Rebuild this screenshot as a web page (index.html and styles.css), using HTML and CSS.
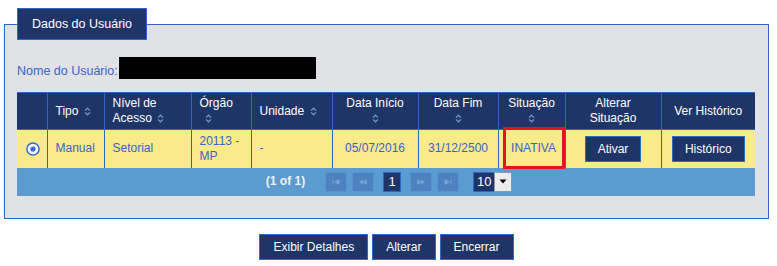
FILE: index.html
```html
<!DOCTYPE html>
<html lang="pt-BR">
<head>
<meta charset="utf-8">
<title>Dados do Usuário</title>
<link rel="stylesheet" href="styles.css">
</head>
<body>
<div class="page">
  <fieldset class="panel">
    <legend class="panel-title">Dados do Usuário</legend>
    <div class="name-row">
      <span class="name-label">Nome do Usuário:</span><span class="redacted"></span>
    </div>
    <table class="grid">
      <colgroup>
        <col class="w30"><col class="w57"><col class="w87"><col class="w60"><col class="w81">
        <col class="w86"><col class="w80"><col class="w67"><col class="w96"><col class="w94">
      </colgroup>
      <thead>
        <tr class="head-row">
          <th></th>
          <th class="left">Tipo <svg class="sort" viewBox="0 0 7 9"><path d="M1 3.6 3.5 1.2 6 3.6M1 5.4 3.5 7.8 6 5.4"/></svg></th>
          <th class="left">Nível de<br>Acesso <svg class="sort" viewBox="0 0 7 9"><path d="M1 3.6 3.5 1.2 6 3.6M1 5.4 3.5 7.8 6 5.4"/></svg></th>
          <th class="left">Órgão<br><svg class="sort sort-w" viewBox="0 0 7 9"><path d="M1 3.6 3.5 1.2 6 3.6M1 5.4 3.5 7.8 6 5.4"/></svg></th>
          <th class="left">Unidade <svg class="sort" viewBox="0 0 7 9"><path d="M1 3.6 3.5 1.2 6 3.6M1 5.4 3.5 7.8 6 5.4"/></svg></th>
          <th>Data Início<br><svg class="sort sort-c" viewBox="0 0 7 9"><path d="M1 3.6 3.5 1.2 6 3.6M1 5.4 3.5 7.8 6 5.4"/></svg></th>
          <th>Data Fim<br><svg class="sort sort-c" viewBox="0 0 7 9"><path d="M1 3.6 3.5 1.2 6 3.6M1 5.4 3.5 7.8 6 5.4"/></svg></th>
          <th>Situação<br><svg class="sort sort-c" viewBox="0 0 7 9"><path d="M1 3.6 3.5 1.2 6 3.6M1 5.4 3.5 7.8 6 5.4"/></svg></th>
          <th>Alterar<br>Situação</th>
          <th>Ver Histórico</th>
        </tr>
      </thead>
      <tbody>
        <tr class="data-row">
          <td class="radio-cell"><svg class="radio" viewBox="0 0 14 14"><circle cx="7" cy="7" r="6.1" class="ring"/><circle cx="7" cy="7" r="2.6" class="dot"/></svg></td>
          <td class="left">Manual</td>
          <td class="left">Setorial</td>
          <td class="left">20113 - MP</td>
          <td class="left">-</td>
          <td>05/07/2016</td>
          <td>31/12/2500</td>
          <td class="status">INATIVA<span class="highlight"></span></td>
          <td><button class="btn">Ativar</button></td>
          <td><button class="btn">Histórico</button></td>
        </tr>
      </tbody>
      <tfoot>
        <tr>
          <td colspan="10" class="pager">
            <div class="pager-inner">
              <span class="page-info">(1 of 1)</span>
              <span class="pg-btn pg-first"><svg viewBox="0 0 8 6"><path d="M1 0.5v5M7 0.5 3 3l4 2.5z"/></svg></span>
              <span class="pg-btn pg-prev"><svg viewBox="0 0 9 6"><path d="M4.5 0.5 1 3l3.5 2.5zM8.5 0.5 5 3l3.5 2.5z"/></svg></span>
              <span class="pg-page">1</span>
              <span class="pg-btn pg-next"><svg viewBox="0 0 9 6"><path d="M0.5 0.5 4 3 0.5 5.5zM4.5 0.5 8 3 4.5 5.5z"/></svg></span>
              <span class="pg-btn pg-last"><svg viewBox="0 0 8 6"><path d="M1 0.5 5 3 1 5.5zM7 0.5v5"/></svg></span>
              <span class="rows-select"><span class="rows-value">10</span><span class="rows-arrow"><svg viewBox="0 0 8 5"><path d="M0.5 0.5h7L4 4.5z"/></svg></span></span>
            </div>
          </td>
        </tr>
      </tfoot>
    </table>
  </fieldset>
  <div class="actions">
    <button class="btn">Exibir Detalhes</button>
    <button class="btn">Alterar</button>
    <button class="btn">Encerrar</button>
  </div>
</div>
</body>
</html>
```
FILE: styles.css
```css
html, body {
  margin: 0;
  padding: 0;
  background: #ffffff;
}

body {
  font-family: "Liberation Sans", Arial, sans-serif;
  font-size: 12px;
  color: #3a63c9;
}

.page {
  padding: 8px 8px 0 4px;
}

.panel {
  margin: 0;
  padding: 0 12px 22px 12px;
  border: 1px solid #2c66cc;
  background: #e1e2e6;
  min-width: 0;
}

.panel-title {
  padding: 0 14px;
  height: 30px;
  line-height: 30px;
  border: 1px solid #2c66cc;
  background: #1f3568;
  color: #ffffff;
  font-size: 12.5px;
}

.name-row {
  display: flex;
  align-items: flex-end;
  margin-top: 17px;
  height: 22px;
}

.name-label {
  font-size: 12.5px;
  line-height: 16px;
  color: #3a63c9;
}

.redacted {
  display: inline-block;
  width: 197px;
  height: 22px;
  background: #000000;
  margin-left: 1px;
}

.grid {
  margin-top: 13px;
  width: 738px;
  border-collapse: collapse;
  table-layout: fixed;
  font-size: 12px;
}

.w30 { width: 30px; }
.w57 { width: 57px; }
.w87 { width: 87px; }
.w60 { width: 60px; }
.w81 { width: 81px; }
.w86 { width: 86px; }
.w80 { width: 80px; }
.w67 { width: 67px; }
.w96 { width: 96px; }
.w94 { width: 94px; }

.grid th,
.grid td {
  border: 1px solid #2c66cc;
  padding: 0 8px;
  text-align: center;
  vertical-align: middle;
  line-height: 15px;
}

.grid th:first-child,
.grid td:first-child {
  border-left: none;
}

.grid th:last-child,
.grid td:last-child {
  border-right: none;
}

.grid .left {
  text-align: left;
}

.head-row {
  height: 37px;
}

.grid th {
  background: #1f3568;
  color: #ffffff;
  font-weight: normal;
}

.sort {
  display: inline-block;
  width: 7px;
  height: 9px;
  margin-left: 2px;
  vertical-align: -1px;
  fill: none;
  stroke: #6e98d4;
  stroke-width: 1.3;
}

.sort-w {
  margin-left: 5px;
}

.sort-c {
  margin-left: 0;
}

.data-row {
  height: 38px;
}

.grid .data-row td {
  background: #faea8a;
  color: #3a63c9;
  border-bottom: none;
}

.grid .radio-cell {
  padding: 0;
}

.radio {
  display: block;
  width: 14px;
  height: 14px;
  margin: 0 auto;
  position: relative;
  left: 1px;
}

.radio .ring {
  fill: #ffffff;
  stroke: #2f6bd0;
  stroke-width: 1.5;
}

.radio .dot {
  fill: #2f6bd0;
}

.grid .status {
  position: relative;
  padding: 0 4px 0 8px;
}

.highlight {
  position: absolute;
  left: 4px;
  right: 0;
  top: -3px;
  bottom: -1px;
  border: 3px solid #e8131c;
}

.btn {
  height: 26px;
  padding: 0 12px;
  border: 1px solid #2f6ad2;
  background: #1f3568;
  color: #ffffff;
  font-family: "Liberation Sans", Arial, sans-serif;
  font-size: 12px;
  cursor: pointer;
}

.grid .pager {
  border: none;
  background: #5b9bcf;
  height: 28px;
  padding: 0;
}

.pager-inner {
  display: flex;
  justify-content: center;
  align-items: center;
  padding-left: 6px;
}

.page-info {
  color: #eef2f8;
  font-weight: bold;
  margin-right: 20px;
}

.pg-btn {
  display: flex;
  align-items: center;
  justify-content: center;
  width: 20px;
  height: 18px;
  background: #4d82bf;
  border: 1px solid #5c92d2;
}

.pg-btn svg {
  width: 8px;
  height: 6px;
  fill: #78a3d6;
  stroke: #78a3d6;
  stroke-width: 1;
}

.pg-prev,
.pg-last {
  margin-left: 5px;
}

.pg-page {
  margin-left: 9px;
  width: 16px;
  height: 18px;
  line-height: 18px;
  text-align: center;
  background: #1f3568;
  border: 1px solid #2c66cc;
  color: #ffffff;
  font-size: 13px;
}

.pg-next {
  margin-left: 9px;
}

.rows-select {
  display: flex;
  margin-left: 14px;
  height: 20px;
}

.rows-value {
  width: 20px;
  height: 18px;
  line-height: 18px;
  background: #1f3568;
  border: 1px solid #2c66cc;
  border-right: none;
  color: #ffffff;
  font-size: 13px;
  text-align: center;
}

.rows-arrow {
  display: flex;
  align-items: center;
  justify-content: center;
  width: 16px;
  height: 18px;
  background: #ececec;
  border: 1px solid #8f9aa8;
}

.rows-arrow svg {
  width: 8px;
  height: 5px;
  fill: #000000;
}

.actions {
  display: flex;
  justify-content: center;
  gap: 4px;
  margin-top: 15px;
}

.actions .btn {
  padding: 0 13px;
}
```
